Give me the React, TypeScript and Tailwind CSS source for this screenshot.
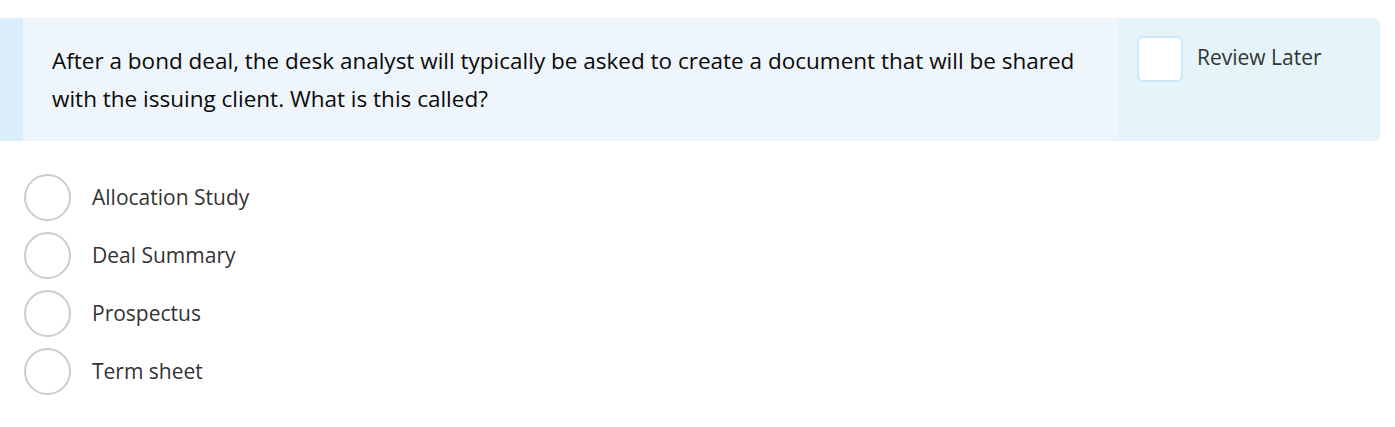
import React from "react";

const options = ["Allocation Study", "Deal Summary", "Prospectus", "Term sheet"];

export default function App() {
  return (
    <div className="w-[1395px] h-[427px] bg-white pt-[18px]" style={{ fontFamily: '"Open Sans", sans-serif' }}>
      <div className="flex w-[1380px] h-[123px] rounded-r-[6px] overflow-hidden">
        <div className="w-[23px] bg-[#daeef9]" />
        <div className="flex-1 bg-[#eef6fc] pl-[29px] pr-[20px] pt-[24px]">
          <p className="text-[22.5px] leading-[38px] text-[#0a0a0a]">
            After a bond deal, the desk analyst will typically be asked to create a document that will be shared with the issuing client. What is this called?
          </p>
        </div>
        <div className="w-[262px] bg-[#e5f3fb] pl-[19px] pt-[18px] flex items-start gap-[14px]">
          <div className="w-[46px] h-[46px] bg-white border-2 border-[#cde9f7] rounded-[6px]" />
          <span className="text-[21px] leading-[28px] text-[#333] mt-[7px]">Review Later</span>
        </div>
      </div>
      <div className="pl-[24px] pt-[33px] flex flex-col gap-[11px]">
        {options.map((o) => (
          <div key={o} className="flex items-center gap-[21px]">
            <div className="w-[47px] h-[47px] rounded-full border-2 border-[#cccccc] bg-white" />
            <span className="text-[21px] text-[#333]">{o}</span>
          </div>
        ))}
      </div>
    </div>
  );
}
